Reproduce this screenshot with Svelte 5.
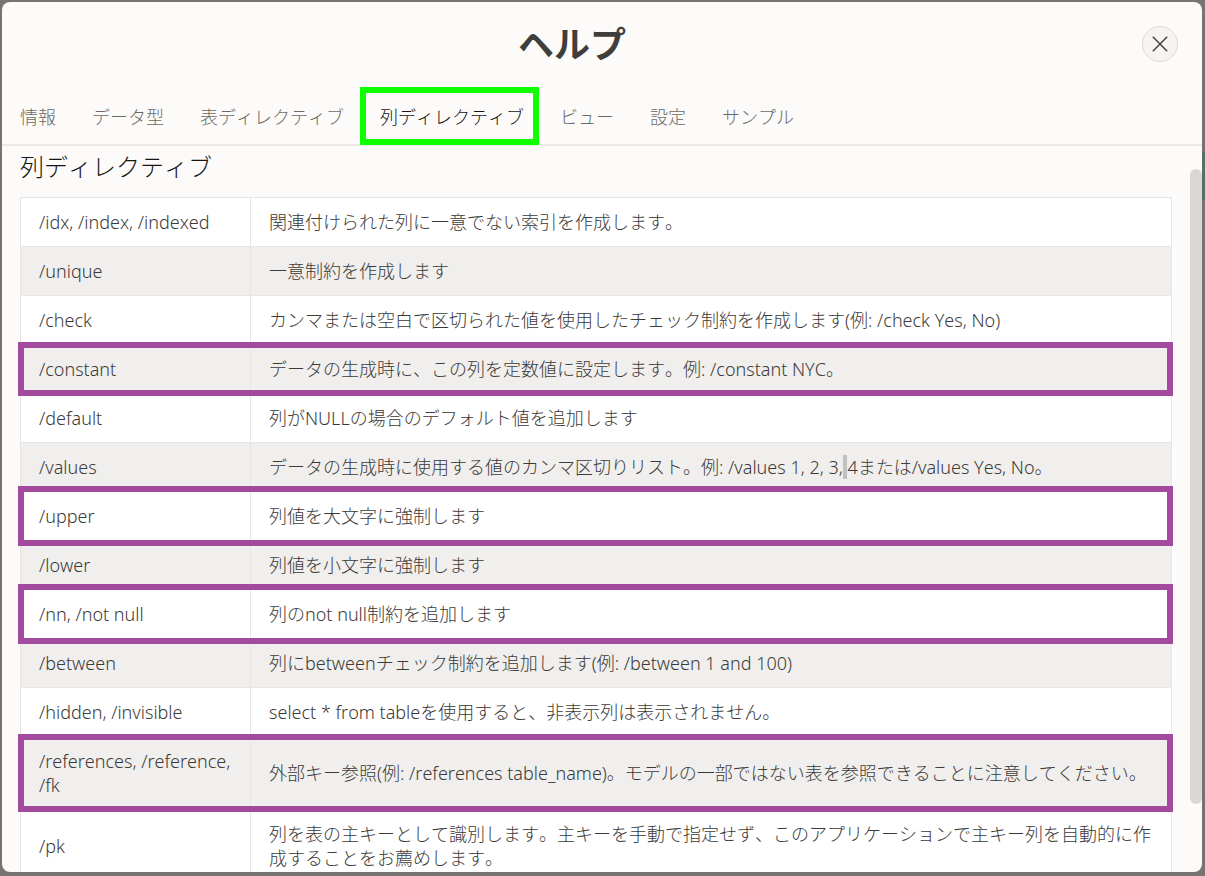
<script>
  const tabs = ['情報', 'データ型', '表ディレクティブ', '列ディレクティブ', 'ビュー', '設定', 'サンプル'];
  let active = $state(3);

  const rows = [
    { name: '/idx, /index, /indexed', text: '関連付けられた列に一意でない索引を作成します。' },
    { name: '/unique', text: '一意制約を作成します' },
    { name: '/check', text: 'カンマまたは空白で区切られた値を使用したチェック制約を作成します(例: /check Yes, No)' },
    { name: '/constant', text: 'データの生成時に、この列を定数値に設定します。例: /constant NYC。', frame: 'snug' },
    { name: '/default', text: '列がNULLの場合のデフォルト値を追加します' },
    {
      name: '/values',
      text: 'データの生成時に使用する値のカンマ区切りリスト。例: /values 1, 2, 3,',
      marked: ' ',
      rest: '4または/values Yes, No。'
    },
    { name: '/upper', text: '列値を大文字に強制します', frame: 'loose' },
    { name: '/lower', text: '列値を小文字に強制します' },
    { name: '/nn, /not null', text: '列のnot null制約を追加します', frame: 'loose' },
    { name: '/between', text: '列にbetweenチェック制約を追加します(例: /between 1 and 100)' },
    { name: '/hidden, /invisible', text: 'select * from tableを使用すると、非表示列は表示されません。' },
    { name: '/references, /reference, /fk', text: '外部キー参照(例: /references table_name)。モデルの一部ではない表を参照できることに注意してください。', frame: 'snug' },
    { name: '/pk', text: '列を表の主キーとして識別します。主キーを手動で指定せず、このアプリケーションで主キー列を自動的に作成することをお薦めします。' }
  ];
</script>

<div class="backdrop">
  <div class="dialog" role="dialog" aria-labelledby="title">
    <header>
      <h1 id="title">ヘルプ</h1>
      <button class="close" aria-label="閉じる">
        <svg viewBox="0 0 16 16" width="16" height="16" aria-hidden="true">
          <path d="M0.8 0.8 15.2 15.2M15.2 0.8 0.8 15.2" />
        </svg>
      </button>
    </header>

    <div class="tabs" role="tablist">
      {#each tabs as tab, i}
        <button role="tab" aria-selected={i === active} class:active={i === active} onclick={() => (active = i)}>{tab}</button>
      {/each}
    </div>

    <div class="body">
      <h2>列ディレクティブ</h2>
      <table>
        <tbody>
          {#each rows as row}
            <tr class={row.frame}>
              <th scope="row">{row.name}</th>
              <td>{row.text}{#if row.marked}<mark>{row.marked}</mark>{row.rest}{/if}</td>
            </tr>
          {/each}
        </tbody>
      </table>
      <div class="thumb"></div>
    </div>
  </div>
</div>

<style>
  :global(body) {
    margin: 0;
  }

  .backdrop {
    box-sizing: border-box;
    height: 100vh;
    padding: 2px 3px 4px 2px;
    display: flex;
    overflow: hidden;
    background:
      linear-gradient(#5b7064, #5b7064) right 152px / 3px 48px no-repeat,
      #767370;
    font-family: 'Noto Sans', 'Noto Sans CJK JP', sans-serif;
    font-size: 18px;
    font-kerning: none;
    line-height: 24px;
    color: #3c3a38;
  }

  .dialog {
    flex: 1;
    min-width: 0;
    display: flex;
    flex-direction: column;
    overflow: hidden;
    border-radius: 8px;
    background: #fcfbfa;
  }

  header {
    display: flex;
    align-items: center;
    height: 85px;
    padding: 0 24px 2px 0;
    box-sizing: border-box;
  }

  h1 {
    flex: 1;
    margin: 0;
    padding-bottom: 4px;
    text-align: center;
    font-family: 'Noto Sans CJK JP', sans-serif;
    font-size: 36px;
    line-height: 48px;
    font-weight: 700;
    color: #403e3c;
  }

  button {
    padding: 0;
    border: 0;
    background: none;
    font: inherit;
    font-kerning: none;
    color: inherit;
    cursor: pointer;
  }

  .close {
    width: 36px;
    height: 36px;
    display: grid;
    place-items: center;
    border: 1px solid #dcdad8;
    border-radius: 50%;
    background: #f5f4f2;
  }

  .close path {
    fill: none;
    stroke: #403e3c;
    stroke-width: 1.4;
  }

  .tabs {
    display: flex;
    border-bottom: 2px solid #eae8e6;
    font-family: 'Noto Sans CJK JP', sans-serif;
    font-weight: 300;
  }

  .tabs button {
    position: relative;
    height: 57px;
    padding: 0 18px;
    white-space: nowrap;
    color: #6b6966;
  }

  .tabs .active {
    color: #161513;
  }

  .tabs .active::after {
    content: '';
    position: absolute;
    inset: 0 3px -1px -2px;
    border: 6px solid #0dff00;
  }

  .body {
    position: relative;
    flex: 1;
    min-height: 0;
    overflow: hidden;
    padding: 2px 29px 0 18px;
  }

  h2 {
    margin: 0 0 13px;
    font-family: 'Noto Sans CJK JP', sans-serif;
    font-size: 24px;
    line-height: 36px;
    font-weight: 300;
    color: #161513;
  }

  table {
    width: 100%;
    border-collapse: collapse;
    background: #fff;
    font-weight: 300;
  }

  tr:nth-child(even) {
    background: #f0efed;
  }

  th,
  td {
    padding: 12px 18px;
    border: 1px solid #e8e6e4;
    text-align: left;
    font-weight: 300;
    vertical-align: middle;
  }

  th {
    width: 193px;
  }

  mark {
    background: #c2c1c0;
    color: inherit;
  }

  .snug,
  .loose {
    position: relative;
    z-index: 1;
  }

  .snug::after,
  .loose::after {
    content: '';
    position: absolute;
    border: 6px solid #a34a9f;
    inset: -3px 0 -2px -3px;
  }

  .loose::after {
    inset: -6px 0 -5px -3px;
  }

  .thumb {
    position: absolute;
    top: 23px;
    right: 0;
    bottom: 68px;
    width: 12px;
    border-radius: 6px;
    background: #d9d8d6;
  }
</style>
